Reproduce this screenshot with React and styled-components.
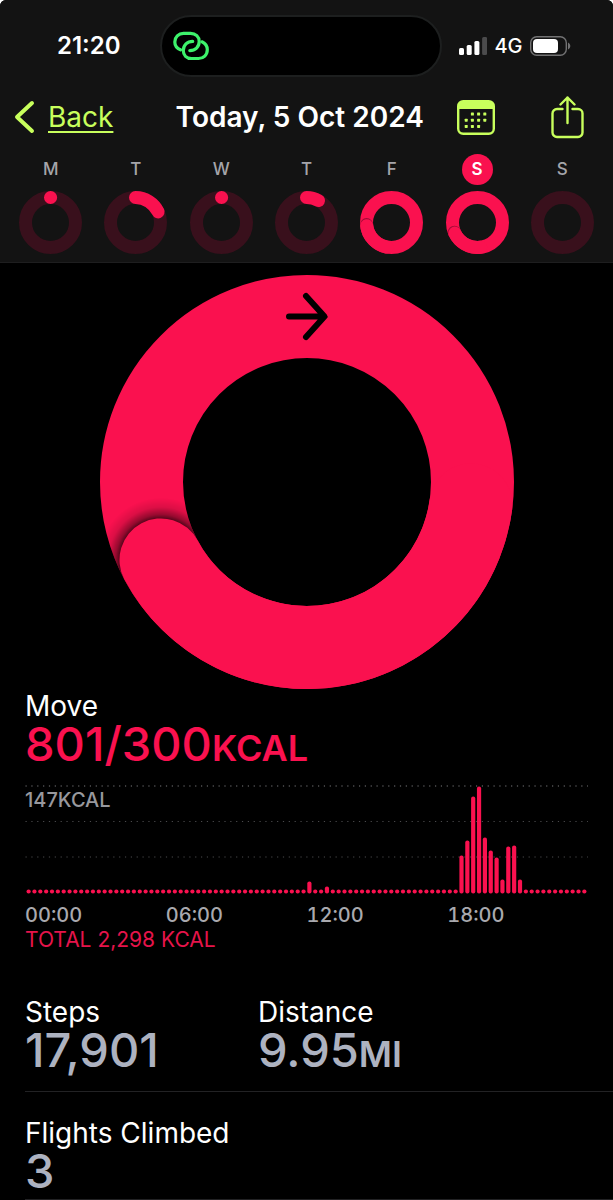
import React from "react";
import styled, { createGlobalStyle } from "styled-components";

const PINK = "#fa114f";
const LIME = "#c8ff5c";

const GlobalStyle = createGlobalStyle`
  *, *::before, *::after { box-sizing: border-box; }
  body {
    margin: 0;
    background: #fff;
    color: #fff;
    font-family: Inter, "Liberation Sans", sans-serif;
  }
  h1, h2, p, dl, dt, dd, ol { margin: 0; padding: 0; font-weight: 400; }
  svg { display: block; }
`;

const Screen = styled.div`
  min-height: 100vh;
  background: #000;
  border-radius: 6px 6px 0 0;
  overflow: hidden;
`;

const Header = styled.header`
  background: #131313;
  border-bottom: 1px solid #1e1e1f;
  padding: 15px 0 8px;
`;

const StatusBar = styled.div`
  display: grid;
  grid-template-columns: minmax(0, 16fr) 282px minmax(0, 17fr);
  align-items: center;
`;

const StatusSide = styled.div`
  display: flex;
  align-items: center;
  gap: 7px;
  padding-left: ${(p) => p.$start}px;
  font-size: ${(p) => p.$size}px;
  font-weight: ${(p) => p.$weight};
  line-height: 24px;
`;

const Island = styled.div`
  height: 62px;
  display: flex;
  align-items: center;
  padding-left: 11px;
  border: 2px solid #1d1f1f;
  border-radius: 31px;
  background: #000;
`;

const NavBar = styled.nav`
  display: flex;
  align-items: center;
  height: 44px;
  margin-top: 18px;
  padding: 0 29px 0 13px;
`;

const BackLink = styled.a`
  display: flex;
  align-items: center;
  gap: 12px;
  color: ${LIME};
  font-size: 28px;
  line-height: 32px;
  text-decoration: none;
  span {
    text-decoration: underline;
    text-decoration-thickness: 2px;
    text-underline-offset: 4px;
    text-decoration-skip-ink: none;
  }
`;

const Title = styled.h1`
  flex: 1;
  padding-left: 60px;
  text-align: center;
  font-size: 28px;
  font-weight: 600;
  line-height: 32px;
  white-space: nowrap;
`;

const IconButton = styled.button`
  display: block;
  margin-left: ${(p) => p.$gap}px;
  padding: 0;
  border: 0;
  background: none;
  color: ${LIME};
`;

const Week = styled.ol`
  display: grid;
  grid-template-columns: repeat(7, 1fr);
  margin-top: 15px;
  padding: 0 8px;
  list-style: none;
`;

const Day = styled.li`
  display: flex;
  flex-direction: column;
  align-items: center;
  gap: 6px;
`;

const DayLetter = styled.span`
  width: 31px;
  height: 31px;
  border-radius: 50%;
  background: ${(p) => (p.$active ? PINK : "transparent")};
  color: ${(p) => (p.$active ? "#fff" : "#a5a5aa")};
  font-size: 17px;
  font-weight: ${(p) => (p.$active ? 600 : 500)};
  line-height: 31px;
  text-align: center;
`;

const RingHolder = styled.div`
  display: flex;
  justify-content: center;
  padding-top: 12px;
  svg { max-width: 100%; }
`;

const MoveSection = styled.section`
  padding: 1px 25px 0;
`;

const Label = styled.h2`
  font-size: 28px;
  line-height: 32px;
`;

const Value = styled.p`
  color: ${(p) => p.$color};
  font-size: 47px;
  font-weight: 500;
  line-height: 44px;
  small {
    font-size: 36px;
    font-weight: 600;
    line-height: 1;
  }
`;

const Chart = styled.div`
  position: relative;
  margin-top: 19px;
  svg { width: 100%; height: auto; }
`;

const ChartMax = styled.span`
  position: absolute;
  top: 5px;
  left: 0;
  color: #98989d;
  font-size: 20px;
  font-weight: 500;
  line-height: 20px;
`;

const Hours = styled.div`
  display: grid;
  grid-template-columns: repeat(4, 1fr);
  margin-top: 9px;
  color: #a9a9ae;
  font-size: 20px;
  font-weight: 500;
  font-variant-numeric: tabular-nums;
  line-height: 24px;
`;

const Total = styled.p`
  color: #e6144b;
  font-size: 21px;
  line-height: 26px;
`;

const Stats = styled.div`
  margin-top: 31px;
`;

const StatRow = styled.dl`
  display: grid;
  grid-template-columns: 233px 1fr;
  margin-left: 25px;
  padding: ${(p) => (p.$first ? "12px 0 19px" : "25px 0 6px")};
  border-bottom: 1px solid #222224;
`;

function LinkIcon() {
  return (
    <svg width="36" height="30" viewBox="0 0 36 30" fill="none" stroke="#3df26b" strokeWidth="3.2" strokeLinecap="round">
      <path d="M7.500 18.800C3.800 17.300 1.800 14.500 1.800 11C1.800 6 5.500 2.400 10.500 2.400H17.500C22.700 2.400 26.200 5.800 26.200 10.500C26.200 15.800 22.300 19.600 16.800 19.600" />
      <path d="M29 10.800C32.500 12.400 34.300 15.300 34.300 18.800C34.300 23.900 30.500 27.500 25.500 27.500H18.500C13.500 27.500 10.300 24.200 10.300 19.600C10.300 14.200 14.200 10.400 19.700 10.400" />
    </svg>
  );
}

function SignalIcon() {
  return (
    <svg width="28" height="18" viewBox="0 0 28 18" fill="#fff">
      <rect x="0" y="11" width="5" height="7" rx="1.500" />
      <rect x="7.700" y="8" width="5" height="10" rx="1.500" />
      <rect x="15.400" y="4" width="5" height="14" rx="1.500" />
      <rect x="23.100" y="0" width="5" height="18" rx="1.500" fill="#4b4b4c" />
    </svg>
  );
}

function BatteryIcon() {
  return (
    <svg width="41" height="20" viewBox="0 0 41 20">
      <rect x="0.700" y="0.700" width="35.600" height="18.600" rx="6" fill="none" stroke="#727273" strokeWidth="1.400" />
      <rect x="3" y="3" width="25" height="14" rx="4" fill="#fff" />
      <path d="M38 6.500C39.500 7.200 40.300 8.500 40.300 10S39.500 12.800 38 13.500Z" fill="#727273" />
    </svg>
  );
}

function ChevronIcon() {
  return (
    <svg width="23" height="36" viewBox="0 0 23 36" fill="none" stroke="currentColor" strokeWidth="4" strokeLinecap="round" strokeLinejoin="round">
      <path d="M19 4L4 18L19 32" />
    </svg>
  );
}

const CALENDAR_CELLS = [
  [2, 0], [3, 0], [4, 0],
  [1, 1], [2, 1], [3, 1], [4, 1],
  [1, 2], [2, 2], [3, 2],
];

function CalendarIcon() {
  return (
    <svg width="38" height="35" viewBox="0 0 38 35" fill="currentColor">
      <rect x="1.200" y="1.200" width="35.600" height="32.600" rx="5" fill="none" stroke="currentColor" strokeWidth="2.400" />
      <path d="M1 9V6A5 5 0 0 1 6 1H32A5 5 0 0 1 37 6V9Z" />
      {CALENDAR_CELLS.map(([c, r]) => (
        <rect key={`${c}-${r}`} x={1.500 + c * 6.200} y={12.500 + r * 6.200} width="3" height="3" rx="0.600" />
      ))}
    </svg>
  );
}

function ShareIcon() {
  return (
    <svg width="33" height="43" viewBox="0 0 33 43" fill="none" stroke="currentColor" strokeWidth="2.400" strokeLinecap="round" strokeLinejoin="round">
      <path d="M11.500 13H6A4.500 4.500 0 0 0 1.500 17.500V36.500A4.500 4.500 0 0 0 6 41H27A4.500 4.500 0 0 0 31.500 36.500V17.500A4.500 4.500 0 0 0 27 13H21.500" />
      <path d="M16.500 27V1.500M9.500 8.500L16.500 1.500L23.500 8.500" />
    </svg>
  );
}

function point(c, r, turn) {
  const a = turn * 2 * Math.PI;
  return [c + r * Math.sin(a), c - r * Math.cos(a)];
}

function arc(c, r, from, to) {
  const [x1, y1] = point(c, r, from);
  const [x2, y2] = point(c, r, to);
  return `M${x1} ${y1}A${r} ${r} 0 ${to - from > 0.5 ? 1 : 0} 1 ${x2} ${y2}`;
}

function DayRing({ value }) {
  const c = 31.5;
  const r = 25;
  const full = value > 1;
  const turn = value % 1;
  const [nx, ny] = point(c, r, turn + 0.007);
  return (
    <svg width="63" height="63" viewBox="0 0 63 63" fill="none" strokeWidth="13" strokeLinecap="round">
      <circle cx={c} cy={c} r={r} stroke={full ? PINK : "#39101c"} />
      {full && <circle cx={nx} cy={ny} r="6.500" fill="#a00b36" />}
      {full && <path d={arc(c, r, turn - 0.2, turn)} stroke={PINK} />}
      {!full && value > 0 && <path d={arc(c, r, 0, turn)} stroke={PINK} />}
    </svg>
  );
}

function MoveRing({ value }) {
  const c = 207;
  const r = 165.5;
  const turn = value % 1;
  const [x, y] = point(c, r, turn);
  return (
    <svg width="414" height="414" viewBox="0 0 414 414" fill="none" role="img" aria-label="Move ring">
      <defs>
        <mask id="band">
          <circle cx={c} cy={c} r={r} stroke="#fff" strokeWidth="83" />
        </mask>
        <radialGradient id="capShadow" gradientUnits="userSpaceOnUse" cx={x} cy={y} r="62">
          <stop offset="0.650" stopColor="#000" stopOpacity="0.720" />
          <stop offset="0.730" stopColor="#000" stopOpacity="0.400" />
          <stop offset="0.850" stopColor="#000" stopOpacity="0.120" />
          <stop offset="1" stopColor="#000" stopOpacity="0" />
        </radialGradient>
      </defs>
      <circle cx={c} cy={c} r={r} stroke={PINK} strokeWidth="83" />
      <g mask="url(#band)">
        <circle cx={x} cy={y} r="62" fill="url(#capShadow)" />
      </g>
      <path d={arc(c, r, turn - 0.4, turn)} stroke={PINK} strokeWidth="83" strokeLinecap="round" />
      <path d="M189 41.500H224M206 21L224.500 41.500L206 62" stroke="#000" strokeWidth="6" strokeLinecap="round" strokeLinejoin="round" />
    </svg>
  );
}

const BAR_HEIGHTS = Array(96).fill(4);
BAR_HEIGHTS[48] = 12;
BAR_HEIGHTS[51] = 7;
[38, 53, 97, 107, 56, 43, 36, 14, 47, 48, 14].forEach((h, i) => {
  BAR_HEIGHTS[74 + i] = h;
});

function EnergyChart() {
  return (
    <svg viewBox="0 0 563 109" role="img" aria-label="Energy by time of day">
      {[1, 36.5, 72].map((y, i) => (
        <line key={y} x1="0.500" x2="563" y1={y} y2={y} stroke={i === 0 ? "#7a7a7d" : "#4a4a4c"} strokeWidth="1.200" strokeDasharray="1.200 4.650" />
      ))}
      {BAR_HEIGHTS.map((h, i) => (
        <rect key={i} x={1.500 + i * 5.850} y={108.500 - h} width="4.200" height={h} rx="2" fill={PINK} />
      ))}
    </svg>
  );
}

const DAYS = [
  ["M", 0.001], ["T", 0.180], ["W", 0.001], ["T", 0.080], ["F", 1.730], ["S", 2.680], ["S", 0],
];

function Stat({ label, value, unit }) {
  return (
    <div>
      <Label as="dt">{label}</Label>
      <Value as="dd" $color="#adb2c0">{value}{unit && <small>{unit}</small>}</Value>
    </div>
  );
}

export default function App() {
  return (
    <Screen>
      <GlobalStyle />
      <Header>
        <StatusBar>
          <StatusSide $start={57} $size={24} $weight={600}>21:20</StatusSide>
          <Island><LinkIcon /></Island>
          <StatusSide $start={17} $size={20} $weight={500}>
            <SignalIcon />4G<BatteryIcon />
          </StatusSide>
        </StatusBar>
        <NavBar>
          <BackLink href="#back"><ChevronIcon /><span>Back</span></BackLink>
          <Title>Today, 5 Oct 2024</Title>
          <IconButton $gap={31} aria-label="Calendar"><CalendarIcon /></IconButton>
          <IconButton $gap={56} aria-label="Share"><ShareIcon /></IconButton>
        </NavBar>
        <Week>
          {DAYS.map(([letter, value], i) => (
            <Day key={i}>
              <DayLetter $active={i === 5}>{letter}</DayLetter>
              <DayRing value={value} />
            </Day>
          ))}
        </Week>
      </Header>
      <main>
        <RingHolder><MoveRing value={2.672} /></RingHolder>
        <MoveSection>
          <Label>Move</Label>
          <Value $color={PINK}>801/300<small>KCAL</small></Value>
          <Chart>
            <EnergyChart />
            <ChartMax>147KCAL</ChartMax>
          </Chart>
          <Hours>
            <span>00:00</span><span>06:00</span><span>12:00</span><span>18:00</span>
          </Hours>
          <Total>TOTAL 2,298 KCAL</Total>
        </MoveSection>
        <Stats>
          <StatRow $first>
            <Stat label="Steps" value="17,901" />
            <Stat label="Distance" value="9.95" unit="MI" />
          </StatRow>
          <StatRow>
            <Stat label="Flights Climbed" value="3" />
          </StatRow>
        </Stats>
      </main>
    </Screen>
  );
}
